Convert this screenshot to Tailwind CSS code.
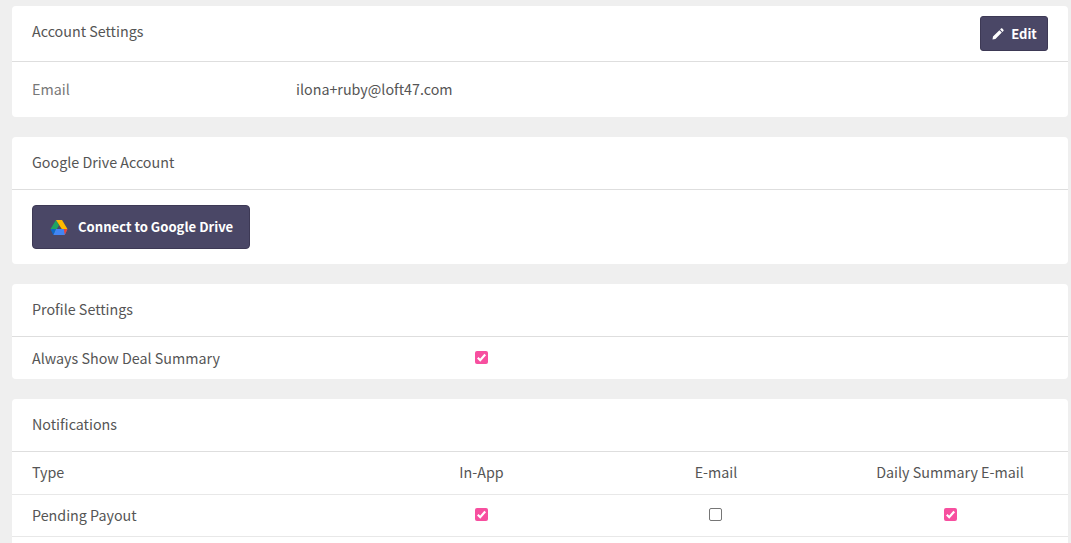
<!DOCTYPE html>
<html><head><meta charset="utf-8"><script src="https://cdn.jsdelivr.net/npm/@tailwindcss/browser@4"></script></head>
<body class="bg-[#efefef] overflow-hidden h-[543px] font-['Noto_Sans_CJK_SC','Noto_Sans',sans-serif] text-[14.3px] text-[#555555]">
<main class="pl-3 pr-[3px] pt-[6px] flex flex-col gap-5">
  <section class="bg-white rounded-[4px]">
    <header class="h-[56px] border-b border-[#dedede] pl-5 pr-5 flex items-center justify-between">
      <h2 class="font-normal pb-[6px]">Account Settings</h2>
      <button class="h-[35px] w-[68px] rounded-[3px] bg-[#4a4766] text-white font-semibold text-[13px] flex items-center justify-center gap-[7px] pl-[1px] border border-[#3d3955]">
        <svg class="w-3 h-3" viewBox="0 0 12 12"><path fill="white" d="M0.5 11.5 L1 8.6 L7.4 2.2 L9.8 4.6 L3.4 11 Z M8.1 1.5 L9 0.6 C9.4 0.2 9.9 0.2 10.3 0.6 L11.4 1.7 C11.8 2.1 11.8 2.6 11.4 3 L10.5 3.9 Z"/></svg>
        Edit
      </button>
    </header>
    <div class="h-[55px] pl-5 flex items-center pb-[1px]">
      <span class="w-[264px] text-[#777777]">Email</span>
      <span>ilona+ruby@loft47.com</span>
    </div>
  </section>
  <section class="bg-white rounded-[4px]">
    <header class="h-[53px] border-b border-[#dedede] pl-5 pb-[2px] flex items-center"><h2 class="font-normal">Google Drive Account</h2></header>
    <div class="h-[74px] pl-5 flex items-center">
      <button class="h-[44px] w-[218px] rounded-[4px] bg-[#4a4766] text-white font-semibold text-[13.1px] flex items-center pl-[17px] gap-[10px] border border-[#3d3955]">
        <svg class="w-[18px] h-[17px]" viewBox="0 0 19 17">
          <path fill="#1ea362" d="M6.3 0.5 L9.5 6 L4.2 15 L0.6 10.2 Z"/>
          <path fill="#ffba00" d="M6.3 0.5 H12.7 L18.4 10.2 H12.4 Z"/>
          <path fill="#4285f4" d="M3.4 16.5 L6.2 10.2 H18.4 L15.6 16.5 Z"/>
          <path fill="#ea4335" d="M15.6 16.5 L18.4 10.2 L14.6 10.2 Z"/>
          <path fill="#0f66c7" d="M0.6 10.2 L6.2 10.2 L3.4 16.5 Z"/>
        </svg>
        Connect to Google Drive
      </button>
    </div>
  </section>
  <section class="bg-white rounded-[4px]">
    <header class="h-[53px] border-b border-[#dedede] pl-5 pb-[2px] flex items-center"><h2 class="font-normal">Profile Settings</h2></header>
    <div class="h-[42px] pl-5 flex items-center">
      <span class="w-[443px]">Always Show Deal Summary</span>
      <span class="w-[13px] h-[13px] mb-[2px] rounded-[2px] bg-[#f74f9f] flex items-center justify-center">
        <svg class="w-[13px] h-[13px]" viewBox="0 0 13 13"><path d="M2.8 6.8 L5.2 9.2 L10.2 3.6" fill="none" stroke="white" stroke-width="2.2"/></svg>
      </span>
    </div>
  </section>
  <section class="bg-white rounded-[4px]">
    <header class="h-[53px] border-b border-[#dedede] pl-5 pb-[2px] flex items-center"><h2 class="font-normal">Notifications</h2></header>
    <div class="grid grid-cols-[332px_235px_234px_234px] h-[43px] items-center border-b border-[#e8e8e8] pl-5 pb-[2px]">
      <span>Type</span>
      <span class="text-center">In-App</span>
      <span class="text-center">E-mail</span>
      <span class="text-center">Daily Summary E-mail</span>
    </div>
    <div class="grid grid-cols-[332px_235px_234px_234px] h-[42px] items-center border-b border-[#e8e8e8] pl-5 pb-[2px]">
      <span>Pending Payout</span>
      <span class="flex justify-center">
        <span class="w-[13px] h-[13px] rounded-[2px] bg-[#f74f9f] flex items-center justify-center">
          <svg class="w-[13px] h-[13px]" viewBox="0 0 13 13"><path d="M2.8 6.8 L5.2 9.2 L10.2 3.6" fill="none" stroke="white" stroke-width="2.2"/></svg>
        </span>
      </span>
      <span class="flex justify-center"><span class="w-[13px] h-[13px] mr-[2px] rounded-[2px] border border-[#767676] bg-white"></span></span>
      <span class="flex justify-center">
        <span class="w-[13px] h-[13px] rounded-[2px] bg-[#f74f9f] flex items-center justify-center">
          <svg class="w-[13px] h-[13px]" viewBox="0 0 13 13"><path d="M2.8 6.8 L5.2 9.2 L10.2 3.6" fill="none" stroke="white" stroke-width="2.2"/></svg>
        </span>
      </span>
    </div>
    <div class="h-[40px]"></div>
  </section>
</main>
</body></html>
